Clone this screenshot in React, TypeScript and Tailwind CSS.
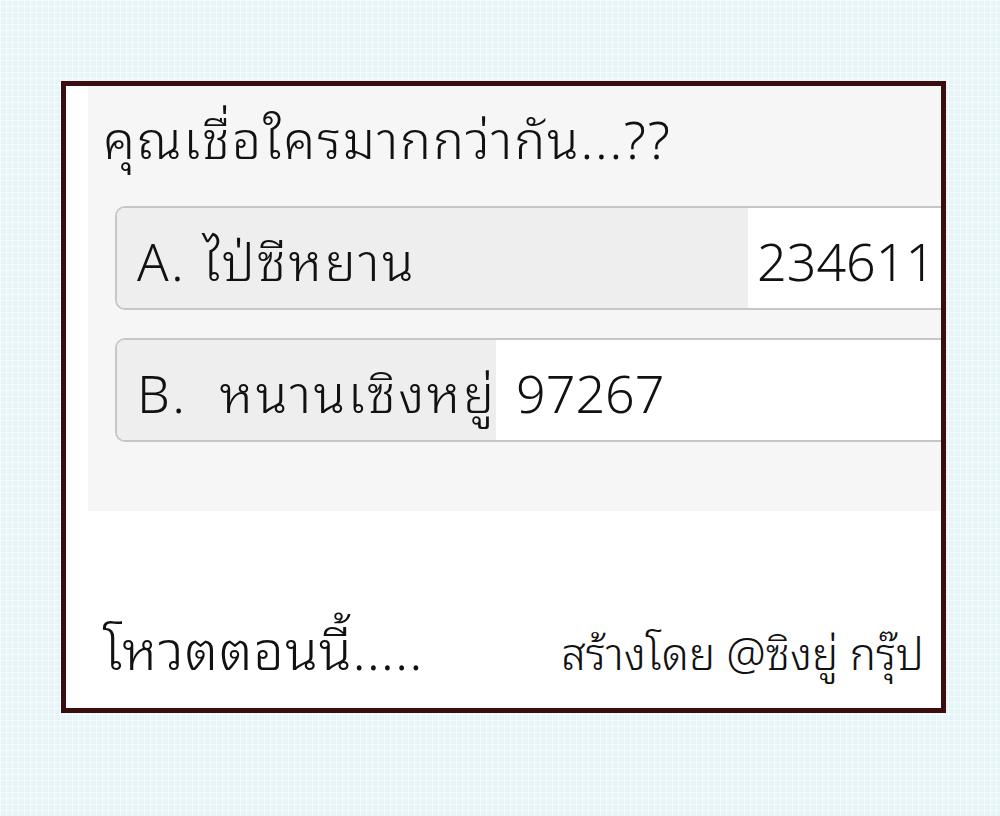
import React from "react";

const thai = "font-['Noto_Sans_Thai_Looped','Noto_Sans_Thai','Noto_Sans','Liberation_Sans',sans-serif] font-light";

function Option({
  label,
  count,
  fillWidth,
  countGap,
}: {
  label: string;
  count: string;
  fillWidth: number;
  countGap: number;
}) {
  return (
    <div className="flex h-[104px] w-[900px] overflow-hidden rounded-[10px] border-2 border-[#c6c6c6] bg-white">
      <div
        className="flex h-full shrink-0 items-center whitespace-pre bg-[#eeeeee] pl-[20px] text-[52px] leading-none tracking-[2.5px] text-[#111]"
        style={{ width: fillWidth }}
      >
        {label}
      </div>
      <div
        className="flex h-full items-center text-[52px] leading-none text-[#111]"
        style={{ paddingLeft: countGap }}
      >
        {count}
      </div>
    </div>
  );
}

export default function App() {
  return (
    <div
      className={`min-h-[816px] w-full bg-[#e7f4f8] bg-[linear-gradient(#ffffff99_1px,transparent_1px),linear-gradient(90deg,#ffffff99_1px,transparent_1px)] bg-[size:6px_6px] pl-[61px] pt-[81px] ${thai}`}
    >
      <div className="flex h-[632px] w-[885px] flex-col border-[5px] border-[#3b0d0e] bg-white">
        <div className="ml-[22px] flex h-[425px] flex-col overflow-hidden bg-[#f6f6f6] pl-[15px]">
          <div className="mt-[20px] text-[52px] leading-[60px] tracking-[1.8px] text-[#111]">คุณเชื่อใครมากกว่ากัน...??</div>
          <div className="ml-[12px] mt-[40px] flex flex-col gap-[28px]">
            <Option label="A. ไป่ซีหยาน" count="234611" fillWidth={631} countGap={9} />
            <Option label="B.  หนานเซิงหยู่" count="97267" fillWidth={379} countGap={20} />
          </div>
        </div>
        <div className="mt-[103px] flex items-end justify-between pl-[37px] pr-[17px]">
          <div className="text-[54px] leading-[64px] tracking-[1px] text-[#111]">โหวตตอนนี้.....</div>
          <div className="pb-[2px] text-[44px] leading-[52px] text-[#111]">สร้างโดย @ซิงยู่ กรุ๊ป</div>
        </div>
      </div>
    </div>
  );
}
